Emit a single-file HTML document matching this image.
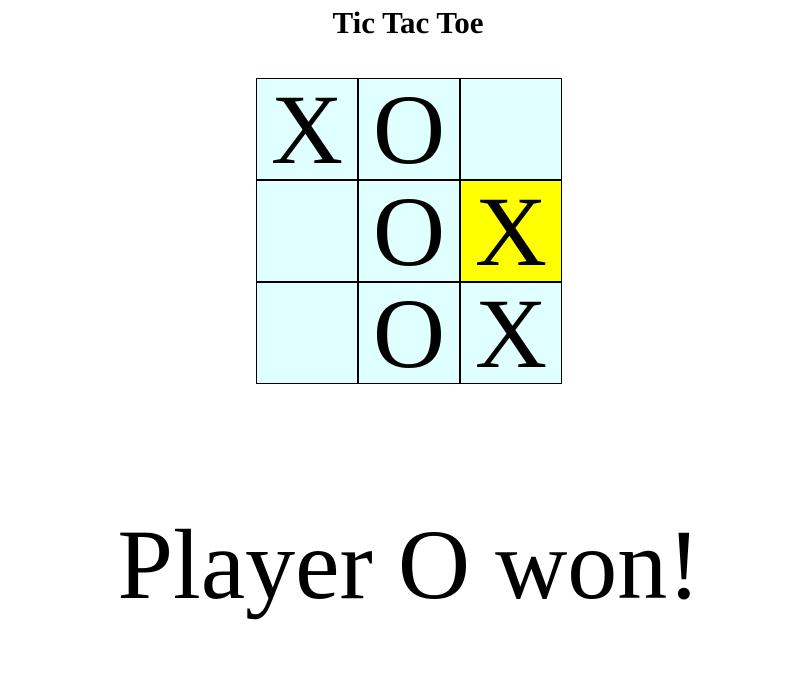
<!DOCTYPE html>
<html><head><style>
body{margin:0;background:#fff;font-family:"Liberation Serif",serif;width:808px;height:678px;position:relative;overflow:hidden}
h1{position:absolute;top:0;left:4px;width:808px;text-align:center;margin:0;font-size:31px;line-height:46px;font-weight:bold}
.g{position:absolute;left:256px;top:78px;width:306px;height:306px}
.c{position:absolute;width:100px;height:100px;border:1px solid #000;background:#e0ffff;font-size:100px;line-height:102px;text-align:center;overflow:hidden}
.y{background:#ffff00}
.m{position:absolute;top:500px;left:5px;width:808px;text-align:center;font-size:100px;line-height:130px}
</style></head><body>
<h1>Tic Tac Toe</h1>
<div class="g">
<div class="c" style="left:0;top:0">X</div>
<div class="c" style="left:102px;top:0">O</div>
<div class="c" style="left:204px;top:0"></div>
<div class="c" style="left:0;top:102px"></div>
<div class="c" style="left:102px;top:102px">O</div>
<div class="c y" style="left:204px;top:102px">X</div>
<div class="c" style="left:0;top:204px"></div>
<div class="c" style="left:102px;top:204px">O</div>
<div class="c" style="left:204px;top:204px">X</div>
</div>
<div class="m">Player O won!</div>
</body></html>
